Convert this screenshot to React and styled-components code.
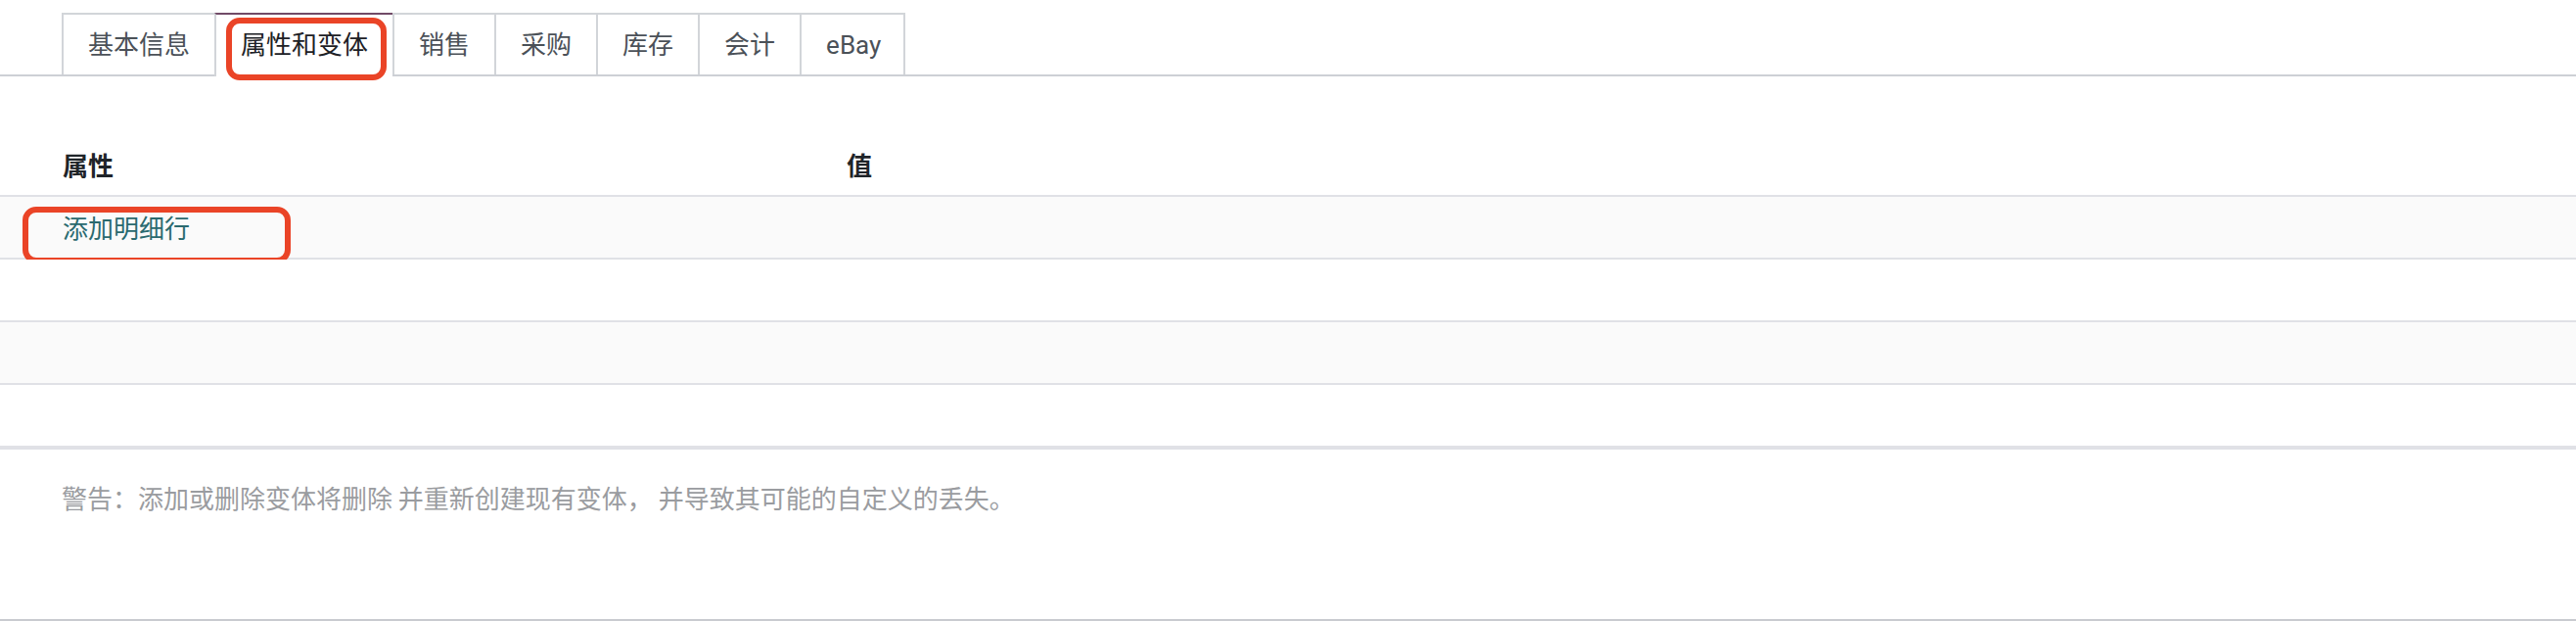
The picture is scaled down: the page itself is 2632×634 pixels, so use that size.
import React from "react";
import styled, { createGlobalStyle, css } from "styled-components";

const GlobalStyle = createGlobalStyle`
  html, body {
    margin: 0;
    padding: 0;
    background: #ffffff;
  }
  body {
    font-family: "Noto Sans CJK SC", Roboto, "Liberation Sans", sans-serif;
    -webkit-font-smoothing: antialiased;
  }
`;

const Page = styled.div`
  width: 2632px;
  background: #fff;
`;

const Callout = css`
  &::after {
    content: "";
    position: absolute;
    border: 6px solid #ea4427;
    border-radius: 14px;
    pointer-events: none;
  }
`;

const TabBar = styled.nav`
  display: flex;
  align-items: flex-end;
  padding: 13px 0 0 63px;
  border-bottom: 2px solid #cdd0d5;
`;

const Tab = styled.div`
  position: relative;
  box-sizing: border-box;
  display: flex;
  align-items: center;
  height: 63px;
  padding: 0 25px;
  border: 2px solid #d2d5d9;
  border-bottom: none;
  border-right: none;
  font-family: Roboto, "Noto Sans CJK SC", sans-serif;
  font-size: 26px;
  line-height: 36px;
  color: #4b5158;
  background: #fff;

  &:last-child {
    border-right: 2px solid #d2d5d9;
    padding-right: 23px;
  }

  ${(p) =>
    p.$active &&
    css`
      height: 65px;
      margin-bottom: -2px;
      padding-bottom: 2px;
      border-top-color: #714b67;
      color: #1d2126;
    `}

  ${(p) =>
    p.$marked &&
    css`
      ${Callout}
      &::after {
        left: 10px;
        right: 6px;
        top: 3px;
        bottom: -4px;
      }
    `}
`;

const Table = styled.section`
  margin-top: 59px;
`;

const Row = styled.div`
  position: relative;
  box-sizing: border-box;
  display: grid;
  grid-template-columns: 865px 1fr;
  align-items: center;
  height: ${(p) => (p.$last ? 66 : 64)}px;
  border-bottom: ${(p) => (p.$last ? 4 : 2)}px solid #e0e1e6;
  background: ${(p) => (p.$striped ? "#fafafa" : "#fff")};
  font-size: 26px;
  line-height: 36px;

  ${(p) =>
    p.$marked &&
    css`
      ${Callout}
      &::after {
        left: 23px;
        width: 274px;
        top: 10px;
        height: 58px;
        box-sizing: border-box;
      }
    `}
`;

const HeadCell = styled.div`
  padding-left: ${(p) => (p.$first ? 64 : 0)}px;
  font-weight: 700;
  color: #1f2429;
`;

const Cell = styled.div`
  padding-left: ${(p) => (p.$first ? 64 : 0)}px;
`;

const AddLink = styled.a`
  color: #2a6a6f;
  text-decoration: none;
  cursor: pointer;
`;

const Footer = styled.div`
  box-sizing: border-box;
  height: 175px;
  padding: 29px 0 0 63px;
  border-bottom: 2px solid #c9cbd0;
`;

const Warning = styled.p`
  margin: 0;
  font-size: 26px;
  line-height: 40px;
  color: #9a9ca0;
`;

const tabs = ["基本信息", "属性和变体", "销售", "采购", "库存", "会计", "eBay"];

export default function App() {
  return (
    <Page>
      <GlobalStyle />
      <TabBar>
        {tabs.map((t, i) => (
          <Tab key={t} $active={i === 1} $marked={i === 1}>
            {t}
          </Tab>
        ))}
      </TabBar>
      <Table>
        <Row>
          <HeadCell $first>属性</HeadCell>
          <HeadCell>值</HeadCell>
        </Row>
        <Row $striped $marked>
          <Cell $first>
            <AddLink>添加明细行</AddLink>
          </Cell>
          <Cell />
        </Row>
        <Row />
        <Row $striped />
        <Row $last />
      </Table>
      <Footer>
        <Warning>
          警告：添加或删除变体将删除 并重新创建现有变体， 并导致其可能的自定义的丢失。
        </Warning>
      </Footer>
    </Page>
  );
}
